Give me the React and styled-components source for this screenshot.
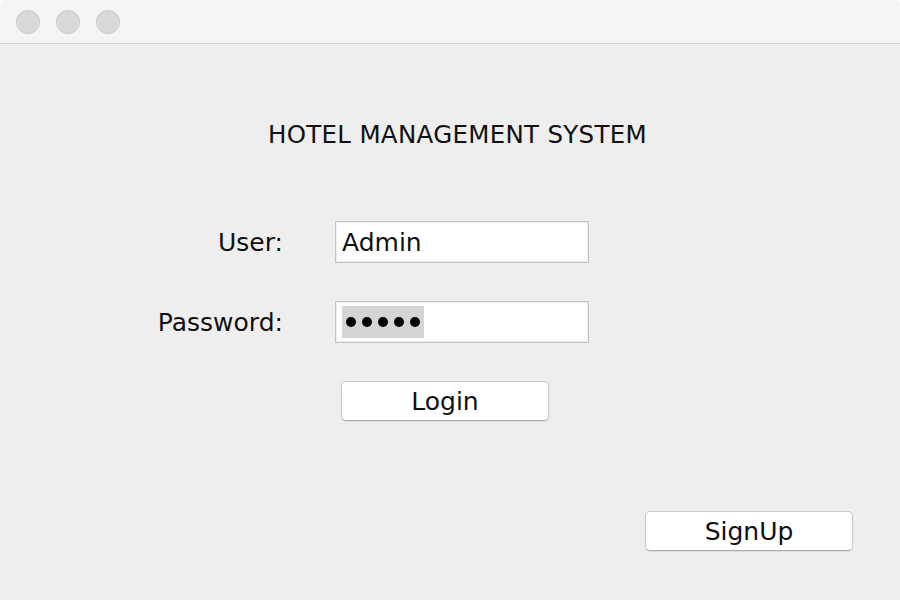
import React from "react";
import styled, { createGlobalStyle } from "styled-components";

const Global = createGlobalStyle`
  html, body { margin: 0; padding: 0; background: #ffffff; }
  body { font-family: "DejaVu Sans", "Liberation Sans", sans-serif; }
  * { box-sizing: border-box; }
`;

const Window = styled.div`
  width: 900px;
  height: 600px;
  background: #eeeeee;
  border-radius: 6px 6px 0 0;
  overflow: hidden;
  display: flex;
  flex-direction: column;
`;

const TitleBar = styled.div`
  height: 44px;
  flex: none;
  background: #f4f4f4;
  border-bottom: 1px solid #d0d0d0;
  display: flex;
  align-items: center;
  padding-left: 16px;
  gap: 16px;
`;

const Light = styled.span`
  width: 24px;
  height: 24px;
  border-radius: 50%;
  background: #d9d9d9;
  border: 1px solid #cacaca;
`;

const Content = styled.div`
  flex: 1;
  display: flex;
  flex-direction: column;
  padding: 77px 47px 0 0;
`;

const Title = styled.h1`
  margin: 0 0 0 268px;
  font-size: 24.5px;
  font-weight: normal;
  color: #111;
  line-height: 28px;
  letter-spacing: 0.3px;
`;

const Form = styled.div`
  margin-top: 72px;
  display: grid;
  grid-template-columns: 283px 254px;
  column-gap: 52px;
  row-gap: 38px;
  align-items: center;
`;

const Label = styled.label`
  text-align: right;
  font-size: 25px;
  color: #111;
`;

const Field = styled.div`
  height: 42px;
  background: #fff;
  border: 1px solid #c4c4c4;
  box-shadow: inset 0 0 0 1px #ececec;
  display: flex;
  align-items: center;
  padding-left: 6px;
  font-size: 25px;
  color: #111;
`;

const Selected = styled.span`
  background: #d4d4d4;
  height: 32px;
  padding: 0 4px;
  display: flex;
  align-items: center;
  gap: 6px;
`;

const Dot = styled.span`
  width: 10px;
  height: 10px;
  border-radius: 50%;
  background: #000;
`;

const Button = styled.button`
  height: 40px;
  width: 208px;
  background: #fff;
  border: 1px solid #c8c8c8;
  border-bottom-color: #aaaaaa;
  border-radius: 5px;
  box-shadow: 0 1px 1px rgba(0, 0, 0, 0.08);
  font-family: inherit;
  font-size: 25px;
  color: #111;
  padding: 0;
`;

const LoginButton = styled(Button)`
  grid-column: 2;
  margin-left: 6px;
`;

const Footer = styled.div`
  display: flex;
  justify-content: flex-end;
  margin-top: 90px;
`;

export default function App() {
  return (
    <>
      <Global />
      <Window>
        <TitleBar>
          <Light />
          <Light />
          <Light />
        </TitleBar>
        <Content>
          <Title>HOTEL MANAGEMENT SYSTEM</Title>
          <Form>
            <Label>User:</Label>
            <Field>Admin</Field>
            <Label>Password:</Label>
            <Field>
              <Selected>
                {[0, 1, 2, 3, 4].map((i) => (
                  <Dot key={i} />
                ))}
              </Selected>
            </Field>
            <LoginButton>Login</LoginButton>
          </Form>
          <Footer>
            <Button>SignUp</Button>
          </Footer>
        </Content>
      </Window>
    </>
  );
}
